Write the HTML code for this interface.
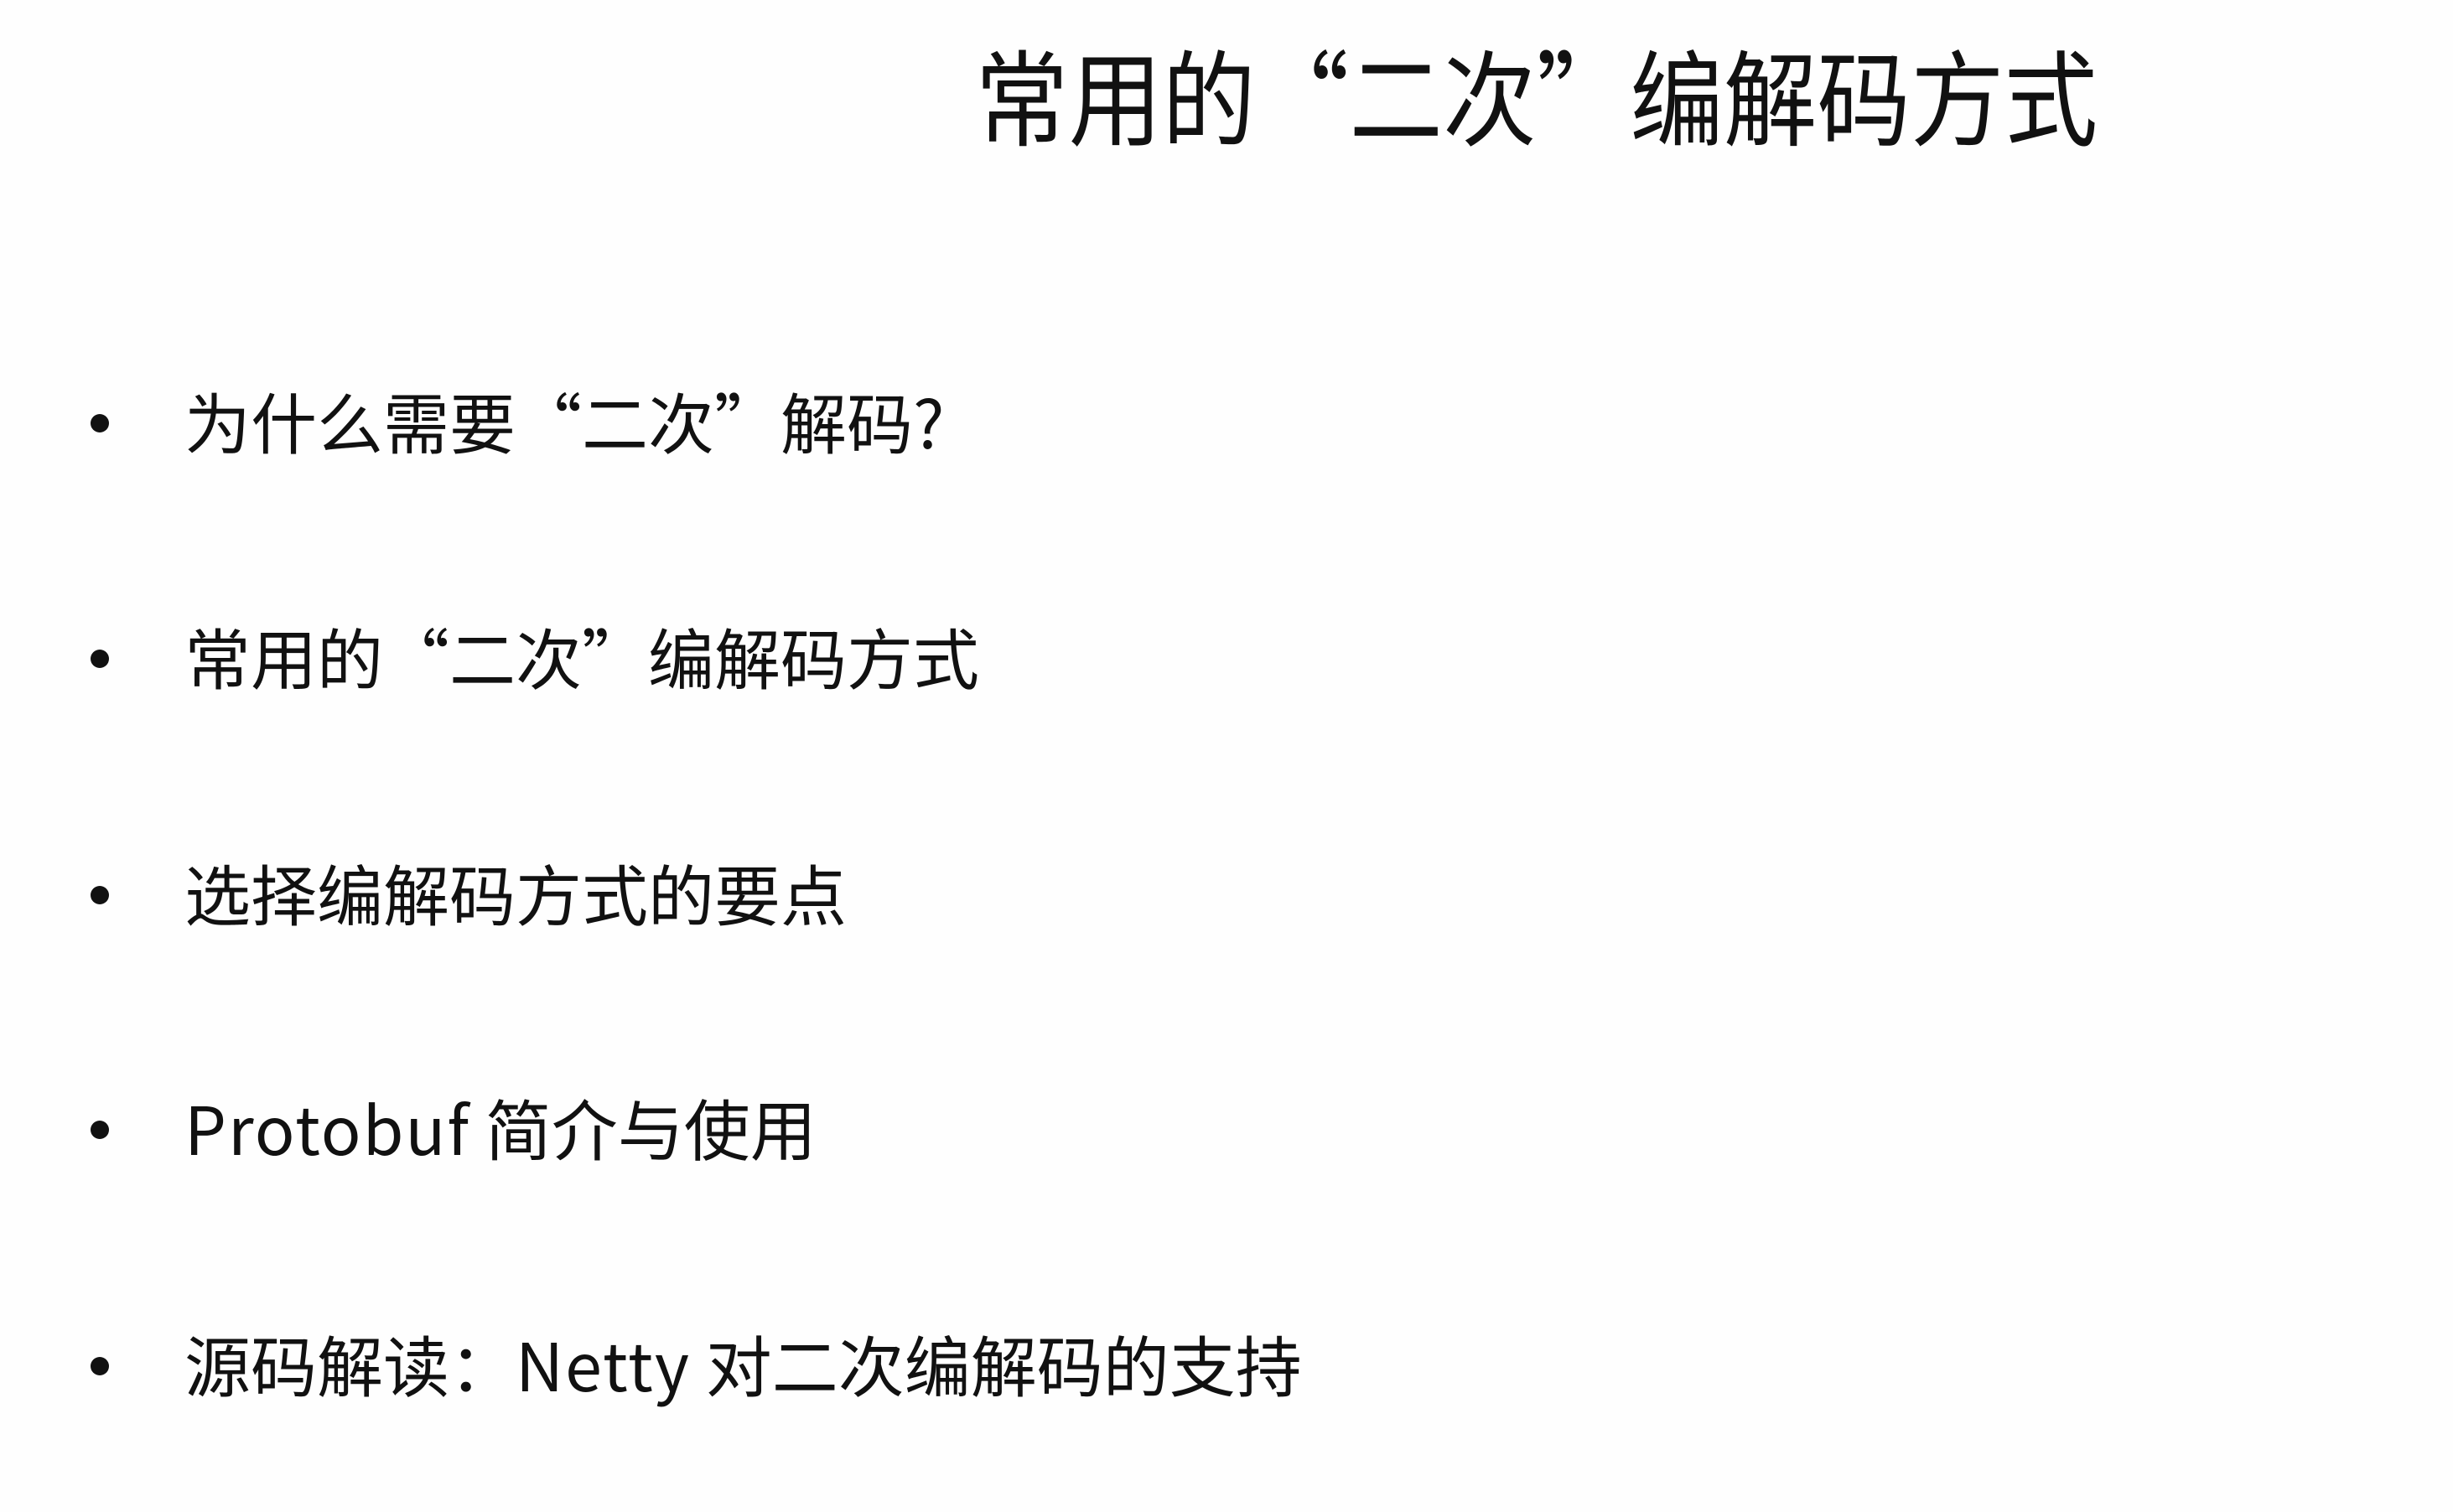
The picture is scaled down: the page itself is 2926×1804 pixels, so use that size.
<!DOCTYPE html>
<html><head><meta charset="utf-8"><style>
html,body{margin:0;padding:0;background:#fefefe;}
body{width:2926px;height:1804px;position:relative;overflow:hidden;font-family:"Noto Sans CJK SC","Liberation Sans",sans-serif;color:#111;}
.t{position:absolute;left:1163px;top:40px;font-size:124px;line-height:140px;white-space:nowrap;transform:scaleX(0.9);transform-origin:0 0;}
.b{position:absolute;left:0;font-size:79px;line-height:90px;white-space:nowrap;}
.b .d{position:absolute;left:108px;top:38px;width:22px;height:22px;border-radius:50%;background:#111;}
.b span.x{position:absolute;left:220px;top:0;}
.l{letter-spacing:2px;}
</style></head><body>
<div class="t">常用的“二次”编解码方式</div>
<div class="b" style="top:456px"><div class="d"></div><span class="x">为什么需要“二次”解码?</span></div>
<div class="b" style="top:737px"><div class="d"></div><span class="x">常用的“二次”编解码方式</span></div>
<div class="b" style="top:1019px"><div class="d"></div><span class="x">选择编解码方式的要点</span></div>
<div class="b" style="top:1299px"><div class="d"></div><span class="x"><span class="l">Protobuf</span> 简介与使用</span></div>
<div class="b" style="top:1581px"><div class="d"></div><span class="x">源码解读：<span class="l">Netty</span> 对二次编解码的支持</span></div>
</body></html>
